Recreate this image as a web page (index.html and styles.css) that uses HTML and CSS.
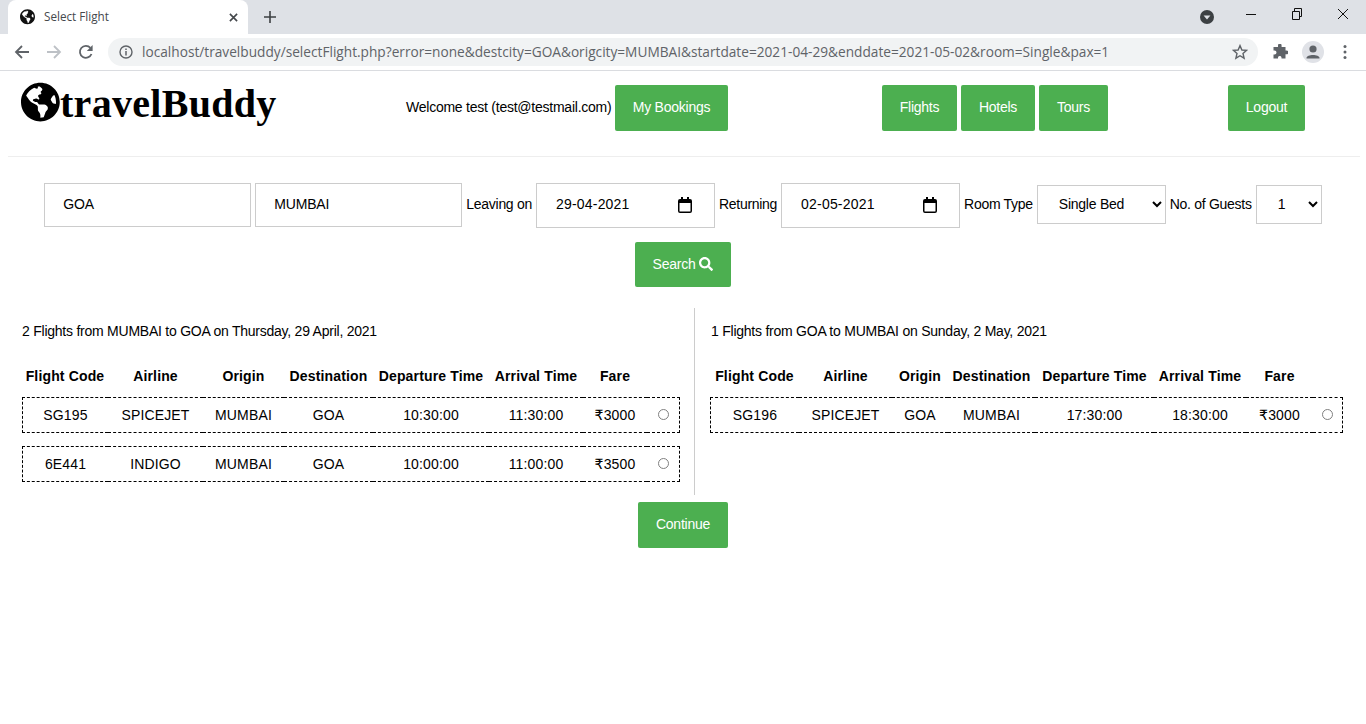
FILE: index.html
```html
<!DOCTYPE html>
<html>
	<head>
		<meta charset="UTF-8" />
		<title>Select Flight</title>
		<link rel="stylesheet" href="styles.css">
	</head>
	<body>
		<div class="tabstrip">
			<div class="tab">
				<svg class="favicon" viewBox="0 0 496 512"><path fill="#111" fill-rule="evenodd" d="M248 8C111.030 8 0 119.030 0 256s111.030 248 248 248 248-111.030 248-248S384.970 8 248 8zm82.290 357.600c-3.900 3.880-7.990 7.950-11.310 11.280-2.990 3-5.100 6.700-6.170 10.710-1.510 5.660-2.730 11.380-4.770 16.870l-17.390 46.850c-13.760 3-28 4.690-42.650 4.690v-27.380c1.690-12.620-7.640-36.260-22.630-51.250-6-6-9.370-14.140-9.370-22.630v-32.010c0-11.640-6.270-22.340-16.460-27.970-14.370-7.950-34.810-19.060-48.810-26.110-11.480-5.780-22.100-13.140-31.650-21.750l-.8-.72a114.792 114.792 0 0 1-18.060-20.740c-9.380-13.770-24.660-36.420-34.590-51.140 20.470-45.500 57.360-82.040 103.200-101.890l24.010 12.010C203.480 89.740 216 82.010 216 70.110v-11.300c7.990-1.290 16.120-2.110 24.450-2.420l28.300 28.300c6.250 6.250 6.250 16.380 0 22.630L264 112l-10.340 10.340c-3.120 3.120-3.120 8.190 0 11.310l4.690 4.690c3.120 3.120 3.120 8.190 0 11.310l-8 8a8.008 8.008 0 0 1-5.670 2.340h-8.990c-2.080 0-4.080.81-5.580 2.270l-9.920 9.650a8.008 8.008 0 0 0-1.580 9.310l15.590 31.190c2.660 5.320-1.210 11.580-7.150 11.580h-5.640c-1.930 0-3.790-.7-5.240-1.960l-9.280-8.060a16.017 16.017 0 0 0-15.550-3.100l-31.170 10.390a11.950 11.950 0 0 0-8.170 11.340c0 4.530 2.560 8.660 6.610 10.690l11.080 5.540c9.410 4.710 19.790 7.160 30.310 7.160s22.590 27.290 32 32h66.750c8.490 0 16.620 3.370 22.630 9.370l13.690 13.690a30.503 30.503 0 0 1 8.930 21.570 46.536 46.536 0 0 1-13.720 32.980zM417 274.250c-5.790-1.450-10.840-5-14.150-9.970l-17.980-26.970a23.970 23.970 0 0 1 0-26.620l19.590-29.380c2.320-3.470 5.500-6.280 9.240-8.150l12.980-6.490C440.200 193.590 448 223.870 448 256c0 8.670-.74 17.160-1.820 25.540L417 274.250z"/></svg>
				<span class="tab-title">Select Flight</span>
				<svg class="tab-close" viewBox="0 0 10 10"><path d="M1 1 L9 9 M9 1 L1 9" stroke="#45484c" stroke-width="1.8" fill="none"/></svg>
			</div>
			<svg class="new-tab" viewBox="0 0 12 12"><path d="M6 0 V12 M0 6 H12" stroke="#3c4043" stroke-width="1.6" fill="none"/></svg>
			<div class="window-controls">
				<svg class="media-btn" viewBox="0 0 14 14"><circle cx="7" cy="7" r="7" fill="#3c4043"/><path d="M3.600 5.400 H10.400 L7 9.600 Z" fill="#dee1e6"/></svg>
				<svg class="win-btn" viewBox="0 0 46 20"><path d="M18 10.500 H28" stroke="#111" fill="none"/></svg>
				<svg class="win-btn" viewBox="0 0 46 20"><path d="M18.500 7.500 H25.500 V15.500 H18.500 Z M20.500 7 V4.500 H27.500 V12.500 H26" stroke="#111" fill="none"/></svg>
				<svg class="win-btn" viewBox="0 0 46 20"><path d="M18 5 L28 15 M28 5 L18 15" stroke="#111" fill="none"/></svg>
			</div>
		</div>
		<div class="toolbar">
			<svg class="nav-icon" viewBox="0 0 16 16"><path d="M15 8 H2 M8 2 L2 8 L8 14" stroke="#5f6368" stroke-width="1.8" fill="none"/></svg>
			<svg class="nav-icon" viewBox="0 0 16 16"><path d="M1 8 H14 M8 2 L14 8 L8 14" stroke="#bdc1c6" stroke-width="1.8" fill="none"/></svg>
			<svg class="nav-icon" viewBox="0 0 16 16"><path d="M13.500 10 A6 6 0 1 1 12.400 3.800" stroke="#5f6368" stroke-width="1.8" fill="none"/><path d="M14.600 1 V7 H8.800 Z" fill="#5f6368"/></svg>
			<div class="omnibox">
				<svg class="info-icon" viewBox="0 0 14 14"><circle cx="7" cy="7" r="6" stroke="#5f6368" stroke-width="1.400" fill="none"/><path d="M7 6 V10.500 M7 3.400 V5" stroke="#5f6368" stroke-width="1.500" fill="none"/></svg>
				<span class="url">localhost/travelbuddy/selectFlight.php?error=none&amp;destcity=GOA&amp;origcity=MUMBAI&amp;startdate=2021-04-29&amp;enddate=2021-05-02&amp;room=Single&amp;pax=1</span>
				<svg class="star-icon" viewBox="0 0 16 16"><path d="M8 1.600 L9.900 6 L14.600 6.400 L11 9.500 L12.100 14.200 L8 11.700 L3.900 14.200 L5 9.500 L1.400 6.400 L6.100 6 Z" stroke="#5f6368" stroke-width="1.400" fill="none"/></svg>
			</div>
			<svg class="ext-icon" viewBox="0 0 16 16"><path fill="#5f6368" d="M6 1.500 A1.800 1.800 0 0 1 9.600 1.500 V3 H13.500 V6.500 H14.500 A1.900 1.900 0 0 1 14.500 10.300 H13.500 V14.500 H9.500 V13.500 A1.800 1.800 0 0 0 6 13.500 V14.500 H1.500 V10.500 H2.500 A2 2 0 0 0 2.500 6.500 H1.500 V3 H6 Z"/></svg>
			<div class="avatar"><svg viewBox="0 0 22 22"><circle cx="11" cy="8" r="3.600" fill="#5f6368"/><path d="M4.500 17 C4.500 13 17.500 13 17.500 17 V17.500 H4.500 Z" fill="#5f6368"/></svg></div>
			<svg class="menu-icon" viewBox="0 0 4 16"><circle cx="2" cy="2.500" r="1.500" fill="#5f6368"/><circle cx="2" cy="8" r="1.500" fill="#5f6368"/><circle cx="2" cy="13.500" r="1.500" fill="#5f6368"/></svg>
		</div>

		<div class="page">
			<div class="header">
				<div class="logo">
					<svg class="logo-globe" viewBox="0 0 496 512"><path fill="#000" fill-rule="evenodd" d="M248 8C111.030 8 0 119.030 0 256s111.030 248 248 248 248-111.030 248-248S384.970 8 248 8zm82.290 357.600c-3.900 3.880-7.990 7.950-11.310 11.280-2.990 3-5.100 6.700-6.170 10.710-1.510 5.660-2.730 11.380-4.770 16.870l-17.390 46.850c-13.760 3-28 4.690-42.650 4.690v-27.380c1.690-12.620-7.640-36.260-22.630-51.250-6-6-9.370-14.140-9.370-22.630v-32.010c0-11.640-6.270-22.340-16.460-27.970-14.370-7.950-34.810-19.060-48.810-26.110-11.480-5.780-22.100-13.140-31.650-21.750l-.8-.72a114.792 114.792 0 0 1-18.060-20.740c-9.380-13.770-24.660-36.420-34.590-51.140 20.470-45.500 57.360-82.040 103.200-101.890l24.010 12.010C203.480 89.740 216 82.010 216 70.110v-11.300c7.990-1.290 16.120-2.110 24.450-2.420l28.300 28.300c6.250 6.250 6.250 16.380 0 22.630L264 112l-10.340 10.340c-3.120 3.120-3.120 8.190 0 11.310l4.690 4.690c3.120 3.120 3.120 8.190 0 11.310l-8 8a8.008 8.008 0 0 1-5.670 2.340h-8.990c-2.080 0-4.080.81-5.580 2.270l-9.920 9.650a8.008 8.008 0 0 0-1.580 9.310l15.590 31.190c2.660 5.320-1.210 11.580-7.150 11.580h-5.640c-1.930 0-3.790-.7-5.240-1.960l-9.280-8.060a16.017 16.017 0 0 0-15.550-3.100l-31.170 10.390a11.950 11.950 0 0 0-8.170 11.340c0 4.530 2.560 8.660 6.610 10.690l11.080 5.540c9.410 4.710 19.790 7.160 30.310 7.160s22.590 27.290 32 32h66.750c8.490 0 16.620 3.370 22.630 9.370l13.690 13.690a30.503 30.503 0 0 1 8.930 21.570 46.536 46.536 0 0 1-13.720 32.980zM417 274.250c-5.790-1.450-10.840-5-14.150-9.970l-17.980-26.970a23.970 23.970 0 0 1 0-26.620l19.590-29.380c2.320-3.470 5.500-6.280 9.240-8.150l12.980-6.490C440.200 193.590 448 223.870 448 256c0 8.670-.74 17.160-1.820 25.540L417 274.250z"/></svg>
					<span class="logo-text">travelBuddy</span>
				</div>
				<span class="welcome">Welcome test (test@testmail.com)</span>
				<a class="btn btn-bookings">My Bookings</a>
				<div class="nav-group">
					<a class="btn">Flights</a>
					<a class="btn">Hotels</a>
					<a class="btn">Tours</a>
				</div>
				<a class="btn btn-logout">Logout</a>
			</div>
			<hr class="rule" />

			<form class="search-form">
				<div class="search-row">
					<input class="text-field" type="text" value="GOA" />
					<input class="text-field" type="text" value="MUMBAI" />
					<label>Leaving on</label>
					<div class="date-field">
						<span>29-04-2021</span>
						<svg viewBox="0 0 14 16"><path fill="#000" d="M3 0 H5 V2 H9 V0 H11 V2 H12 A2 2 0 0 1 14 4 V14 A2 2 0 0 1 12 16 H2 A2 2 0 0 1 0 14 V4 A2 2 0 0 1 2 2 H3 Z M1.500 6 V14 A.5 .5 0 0 0 2 14.500 H12 A.5 .5 0 0 0 12.500 14 V6 Z"/></svg>
					</div>
					<label>Returning</label>
					<div class="date-field">
						<span>02-05-2021</span>
						<svg viewBox="0 0 14 16"><path fill="#000" d="M3 0 H5 V2 H9 V0 H11 V2 H12 A2 2 0 0 1 14 4 V14 A2 2 0 0 1 12 16 H2 A2 2 0 0 1 0 14 V4 A2 2 0 0 1 2 2 H3 Z M1.500 6 V14 A.5 .5 0 0 0 2 14.500 H12 A.5 .5 0 0 0 12.500 14 V6 Z"/></svg>
					</div>
					<label>Room Type</label>
					<select class="select-field room-select"><option>Single Bed</option></select>
					<label>No. of Guests</label>
					<select class="select-field guest-select"><option>1</option></select>
				</div>
				<button class="btn btn-search" type="button">Search
					<svg viewBox="0 0 512 512"><path fill="#fff" d="M505 442.700L405.300 343c-4.500-4.500-10.600-7-17-7H372c27.600-35.300 44-79.700 44-128C416 93.100 322.900 0 208 0S0 93.100 0 208s93.100 208 208 208c48.300 0 92.700-16.400 128-44v16.300c0 6.400 2.500 12.500 7 17l99.700 99.700c9.400 9.400 24.600 9.400 33.900 0l28.300-28.300c9.400-9.400 9.400-24.600.1-34zM208 336c-70.700 0-128-57.200-128-128 0-70.700 57.200-128 128-128 70.700 0 128 57.200 128 128 0 70.700-57.200 128-128 128z"/></svg>
				</button>
			</form>

			<div class="results">
				<div class="panel panel-left">
					<p class="panel-title">2 Flights from MUMBAI to GOA on Thursday, 29 April, 2021</p>
					<table class="flights flights-left">
						<colgroup><col class="c1"><col class="c2"><col class="c3"><col class="c4"><col class="c5"><col class="c6"><col class="c7"><col class="c8"></colgroup>
						<thead>
							<tr><th>Flight Code</th><th>Airline</th><th>Origin</th><th>Destination</th><th>Departure Time</th><th>Arrival Time</th><th>Fare</th><th></th></tr>
						</thead>
						<tbody>
							<tr class="flight"><td>SG195</td><td>SPICEJET</td><td>MUMBAI</td><td>GOA</td><td>10:30:00</td><td>11:30:00</td><td><span class="rupee">₹</span>3000</td><td><input type="radio" name="dep" /></td></tr>
							<tr class="spacer"><td colspan="8"></td></tr>
							<tr class="flight"><td>6E441</td><td>INDIGO</td><td>MUMBAI</td><td>GOA</td><td>10:00:00</td><td>11:00:00</td><td><span class="rupee">₹</span>3500</td><td><input type="radio" name="dep" /></td></tr>
						</tbody>
					</table>
				</div>
				<div class="panel panel-right">
					<p class="panel-title">1 Flights from GOA to MUMBAI on Sunday, 2 May, 2021</p>
					<table class="flights flights-right">
						<colgroup><col class="c1"><col class="c2"><col class="c3"><col class="c4"><col class="c5"><col class="c6"><col class="c7"><col class="c8"></colgroup>
						<thead>
							<tr><th>Flight Code</th><th>Airline</th><th>Origin</th><th>Destination</th><th>Departure Time</th><th>Arrival Time</th><th>Fare</th><th></th></tr>
						</thead>
						<tbody>
							<tr class="flight"><td>SG196</td><td>SPICEJET</td><td>GOA</td><td>MUMBAI</td><td>17:30:00</td><td>18:30:00</td><td><span class="rupee">₹</span>3000</td><td><input type="radio" name="ret" /></td></tr>
						</tbody>
					</table>
				</div>
			</div>
			<div class="continue-row">
				<button class="btn btn-continue" type="button">Continue</button>
			</div>
		</div>
	</body>
</html>
```

FILE: styles.css
```css
* {
	box-sizing: border-box;
}
html,
body {
	margin: 0;
	padding: 0;
	height: 724px;
	overflow: hidden;
	background: #fff;
	font-family: "Liberation Sans", Arial, sans-serif;
	font-size: 14px;
	color: #000;
}

/* browser chrome */
.tabstrip {
	display: flex;
	align-items: flex-start;
	height: 34px;
	background: #dee1e6;
	padding-left: 8px;
}
.tab {
	display: flex;
	align-items: center;
	width: 240px;
	height: 34px;
	background: #fff;
	border-radius: 8px 8px 0 0;
	padding: 0 10px 0 12px;
}
.favicon {
	width: 15px;
	height: 15.500px;
	flex: none;
}
.tab-title {
	flex: 1;
	margin-left: 9px;
	padding-bottom: 2px;
	font-family: "Open Sans", sans-serif;
	font-size: 11.700px;
	color: #45484c;
}
.tab-close {
	width: 9px;
	height: 9px;
	flex: none;
}
.new-tab {
	width: 12px;
	height: 12px;
	margin: 11px 0 0 16px;
}
.window-controls {
	display: flex;
	align-items: flex-start;
	margin-left: auto;
}
.media-btn {
	width: 14px;
	height: 14px;
	margin: 10px 14px 0 0;
}
.win-btn {
	width: 46px;
	height: 20px;
	margin-top: 4px;
}
.toolbar {
	display: flex;
	align-items: center;
	height: 37px;
	border-bottom: 1px solid #dadce0;
	background: #fff;
	padding-left: 14px;
}
.nav-icon {
	width: 16px;
	height: 16px;
	margin-right: 16px;
	flex: none;
}
.omnibox {
	display: flex;
	align-items: center;
	width: 1150px;
	height: 28px;
	margin-left: -2px;
	border-radius: 14px;
	background: #f1f3f4;
	padding: 0 10px 0 11px;
}
.info-icon {
	width: 14px;
	height: 14px;
	flex: none;
}
.url {
	flex: 1;
	margin-left: 9px;
	padding-bottom: 1px;
	font-family: "Open Sans", sans-serif;
	font-size: 13.680px;
	color: #5f6368;
	white-space: nowrap;
}
.star-icon {
	width: 16px;
	height: 16px;
	flex: none;
}
.ext-icon {
	width: 16px;
	height: 16px;
	margin-left: 14px;
	flex: none;
}
.avatar {
	width: 22px;
	height: 22px;
	margin-left: 14px;
	border-radius: 50%;
	background: #e0e2e7;
	flex: none;
}
.menu-icon {
	width: 4px;
	height: 16px;
	margin-left: 19px;
	flex: none;
}

/* site */
.btn {
	display: inline-flex;
	align-items: center;
	justify-content: center;
	height: 46px;
	padding: 0 0 2px;
	border: none;
	border-radius: 2px;
	background: #4caf50;
	color: #fff;
	font: 14px "Liberation Sans", Arial, sans-serif;
	letter-spacing: -0.24px;
	cursor: pointer;
}
.header {
	display: flex;
	align-items: flex-start;
	height: 85px;
	padding: 14px 0 0 21px;
}
.logo {
	display: flex;
	align-items: flex-start;
	width: 385px;
	margin-top: -3px;
}
.logo-globe {
	width: 38.750px;
	height: 40px;
	flex: none;
}
.logo-text {
	margin: -1px 0 0 0.250px;
	font: bold 40px "Liberation Serif", "Times New Roman", serif;
	letter-spacing: 0.300px;
	line-height: 46px;
}
.welcome {
	width: 209px;
	line-height: 44px;
	letter-spacing: -0.240px;
	white-space: nowrap;
}
.btn-bookings {
	width: 113px;
}
.nav-group {
	display: flex;
	gap: 4px;
	margin-left: 154px;
}
.nav-group .btn:nth-child(1) {
	width: 75px;
}
.nav-group .btn:nth-child(2) {
	width: 74px;
}
.nav-group .btn:nth-child(3) {
	width: 69px;
}
.btn-logout {
	width: 77px;
	margin-left: 120px;
}
.rule {
	height: 1px;
	margin: 0 6px 0 8px;
	border: none;
	background: #eee;
}

.search-form {
	display: flex;
	flex-direction: column;
	align-items: center;
	gap: 14px;
	padding-top: 26px;
}
.search-row {
	display: flex;
	align-items: center;
	gap: 4px;
	height: 45px;
}
.search-row label {
	padding-bottom: 3px;
	letter-spacing: -0.290px;
	white-space: nowrap;
}
.text-field,
.date-field,
.select-field {
	border: 1px solid #ccc;
	background: #fff;
	color: #000;
	font: 14px "Liberation Sans", Arial, sans-serif;
}
.text-field {
	width: 207px;
	height: 44px;
	margin-bottom: 1px;
	padding: 0 18px 2px;
	border-radius: 0;
	letter-spacing: -0.200px;
}
.date-field {
	display: flex;
	align-items: center;
	justify-content: space-between;
	width: 179px;
	height: 45px;
	padding: 0 22px 2px 19px;
	letter-spacing: 0.200px;
}
.date-field span {
	margin-bottom: 1px;
}
.date-field svg {
	width: 14px;
	height: 16px;
}
.select-field {
	height: 39px;
	margin-bottom: 2px;
	padding: 0 0 2px 17px;
	border-radius: 0;
	letter-spacing: -0.240px;
}
.room-select {
	width: 129px;
}
.guest-select {
	width: 66px;
}
.btn-search {
	width: 96px;
	height: 45px;
	gap: 4px;
}
.btn-search svg {
	width: 14px;
	height: 14px;
}

.results {
	display: flex;
	margin-top: 21px;
	height: 187px;
}
.panel-left {
	width: 695px;
	padding-left: 22px;
	border-right: 1px solid #ccc;
}
.panel-right {
	flex: 1;
	padding-left: 15px;
}
.panel-right .panel-title {
	margin-left: 1px;
}
.panel-title {
	margin: 15px 0 20px;
	line-height: 16px;
	letter-spacing: -0.240px;
}
.flights {
	table-layout: fixed;
	border-collapse: separate;
	border-spacing: 0;
	letter-spacing: 0.150px;
}
.flights-left {
	width: 658px;
}
.flights-right {
	width: 633px;
}
.flights-left .c1 { width: 86px; }
.flights-left .c2 { width: 95px; }
.flights-left .c3 { width: 81px; }
.flights-left .c4 { width: 89px; }
.flights-left .c5 { width: 116px; }
.flights-left .c6 { width: 94px; }
.flights-left .c7 { width: 64px; }
.flights-left .c8 { width: 33px; }
.flights-right .c1 { width: 89px; }
.flights-right .c2 { width: 93px; }
.flights-right .c3 { width: 56px; }
.flights-right .c4 { width: 87px; }
.flights-right .c5 { width: 119px; }
.flights-right .c6 { width: 92px; }
.flights-right .c7 { width: 67px; }
.flights-right .c8 { width: 30px; }
.flights th {
	height: 38px;
	padding: 0 0 4px;
	font-weight: bold;
	text-align: center;
	white-space: nowrap;
}
.flights td {
	padding: 0;
	text-align: center;
	white-space: nowrap;
}
.flight td {
	height: 36px;
	border-top: 1px dashed #000;
	border-bottom: 1px dashed #000;
}
.flight td:first-child {
	border-left: 1px dashed #000;
}
.flight td:last-child {
	border-right: 1px dashed #000;
}
.flight input {
	appearance: none;
	width: 11px;
	height: 11px;
	margin: 0 0 3px;
	border: 1px solid #808080;
	border-radius: 50%;
	background: #fff;
	vertical-align: middle;
}
.rupee {
	font-family: "DejaVu Sans", sans-serif;
	line-height: 1;
}
.spacer td {
	height: 13px;
}
.continue-row {
	display: flex;
	justify-content: center;
	margin-top: 7px;
}
.btn-continue {
	width: 90px;
}
```
